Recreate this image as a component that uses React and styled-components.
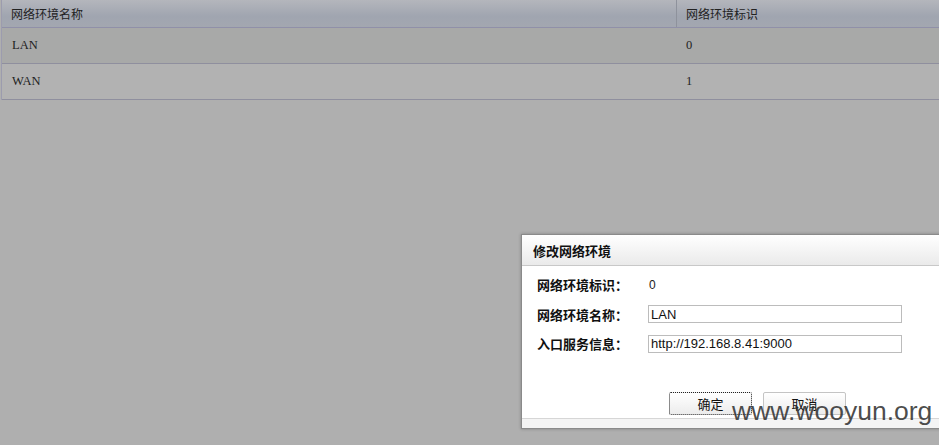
import React from "react";
import styled, { createGlobalStyle } from "styled-components";

const Global = createGlobalStyle`
  html, body { margin: 0; padding: 0; }
  body { background: #afafaf; overflow: hidden; }
`;

const Page = styled.div`
  position: relative;
  width: 939px;
  height: 445px;
  background: #afafaf;
  overflow: hidden;
  font-family: "Liberation Serif", "Noto Sans CJK SC", serif;
`;

const Table = styled.div`
  margin-left: 1px;
  width: 960px;
  border-left: 1px solid #9c9cae;
`;

const HeaderRow = styled.div`
  display: grid;
  grid-template-columns: 674px 1fr;
  height: 27px;
  background: linear-gradient(#b4b6bc, #a0a5b0 60%, #a3a7b0);
  border-bottom: 1px solid #9090a8;
`;

const HeaderCell = styled.div`
  display: flex;
  align-items: center;
  padding-left: ${p => p.$pad}px;
  font-family: "Noto Sans CJK SC", sans-serif;
  font-size: 12px;
  color: #222;
  border-left: ${p => (p.$divider ? "1px solid #8e929c" : "none")};
`;

const Row = styled.div`
  display: grid;
  grid-template-columns: 674px 1fr;
  height: 35px;
  background: ${p => p.$bg};
  border-bottom: 1px solid #8f8f9e;
`;

const Cell = styled.div`
  display: flex;
  align-items: center;
  padding-left: ${p => p.$pad}px;
  font-family: "Liberation Serif", serif;
  font-size: 12.5px;
  color: #222;
`;

const Dialog = styled.div`
  position: absolute;
  left: 521px;
  top: 234px;
  width: 440px;
  height: 193px;
  background: #fff;
  border: 1px solid #8a8a8a;
  box-shadow: 0 0 3px rgba(0, 0, 0, 0.25);
  display: flex;
  flex-direction: column;
`;

const TitleBar = styled.div`
  height: 30px;
  display: flex;
  align-items: center;
  padding-left: 11px;
  background: linear-gradient(#ffffff, #eaeaea);
  border-bottom: 1px solid #c8c8c8;
  font-family: "Noto Sans CJK SC", sans-serif;
  font-weight: bold;
  font-size: 13px;
  color: #111;
`;

const Body = styled.div`
  flex: 1;
  display: flex;
  flex-direction: column;
  padding: 4px 0 0 15px;
`;

const FieldRow = styled.div`
  display: grid;
  grid-template-columns: 111px 254px;
  align-items: center;
  height: 29.5px;
`;

const Label = styled.div`
  font-family: "Noto Sans CJK SC", sans-serif;
  font-weight: bold;
  font-size: 13px;
  color: #111;
`;

const Value = styled.div`
  font-family: "Liberation Sans", sans-serif;
  font-size: 12px;
  color: #222;
  padding-left: 1px;
`;

const Input = styled.input`
  box-sizing: border-box;
  width: 254px;
  height: 18px;
  border: 1px solid #bcbcbc;
  padding: 0 2px;
  font-family: "Liberation Sans", sans-serif;
  font-size: 13px;
  color: #111;
  outline: none;
  background: #fff;
`;

const Buttons = styled.div`
  margin-top: auto;
  display: flex;
  gap: 11px;
  padding-left: 132px;
  padding-bottom: 3px;
`;

const Button = styled.button`
  box-sizing: border-box;
  width: 83px;
  height: 23px;
  background: linear-gradient(#ffffff, #ececec);
  border: 1px ${p => (p.$focus ? "dotted #222" : "solid #c4c4c4")};
  border-radius: 2px;
  font-family: "Noto Sans CJK SC", sans-serif;
  font-size: 13px;
  color: #111;
  padding: 0;
`;

const Footer = styled.div`
  height: 9px;
  background: #f4f4f4;
  border-top: 1px solid #d6d6d6;
`;

const Watermark = styled.div`
  position: absolute;
  left: 732px;
  top: 396px;
  font-family: "Liberation Sans", sans-serif;
  font-size: 26.5px;
  color: rgba(45, 45, 45, 0.85);
  pointer-events: none;
`;

const rows = [
  { name: "LAN", id: "0", bg: "#a8a9a8" },
  { name: "WAN", id: "1", bg: "#b2b2b2" },
];

export default function App() {
  return (
    <Page>
      <Global />
      <Table>
        <HeaderRow>
          <HeaderCell $pad={9}>网络环境名称</HeaderCell>
          <HeaderCell $pad={9} $divider>网络环境标识</HeaderCell>
        </HeaderRow>
        {rows.map(r => (
          <Row key={r.name} $bg={r.bg}>
            <Cell $pad={10}>{r.name}</Cell>
            <Cell $pad={10}>{r.id}</Cell>
          </Row>
        ))}
      </Table>
      <Dialog>
        <TitleBar>修改网络环境</TitleBar>
        <Body>
          <FieldRow>
            <Label>网络环境标识：</Label>
            <Value>0</Value>
          </FieldRow>
          <FieldRow>
            <Label>网络环境名称：</Label>
            <Input defaultValue="LAN" />
          </FieldRow>
          <FieldRow>
            <Label>入口服务信息：</Label>
            <Input defaultValue="http://192.168.8.41:9000" />
          </FieldRow>
          <Buttons>
            <Button $focus>确定</Button>
            <Button>取消</Button>
          </Buttons>
        </Body>
        <Footer />
      </Dialog>
      <Watermark>www.wooyun.org</Watermark>
    </Page>
  );
}
